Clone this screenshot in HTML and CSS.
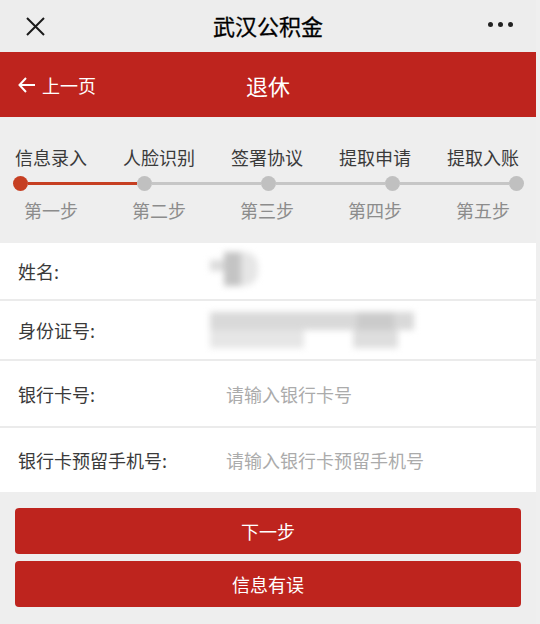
FILE: index.html
```html
<!DOCTYPE html>
<html lang="zh-CN">
<head>
<meta charset="utf-8">
<title>武汉公积金</title>
<link rel="stylesheet" href="styles.css">
</head>
<body>
<div class="page">
  <div class="topbar">
    <div class="tb-left">
      <svg class="ic-close" width="19" height="19" viewBox="0 0 19 19"><path d="M1 1L18 18M18 1L1 18" stroke="#1a1a1a" stroke-width="2" fill="none"/></svg>
    </div>
    <div class="tb-title">武汉公积金</div>
    <div class="tb-right"><span class="dot"></span><span class="dot"></span><span class="dot"></span></div>
  </div>

  <div class="header">
    <div class="back">
      <svg width="18" height="16" viewBox="0 0 18 16"><path d="M8 1L1.5 8L8 15M1.5 8H17" stroke="#fff" stroke-width="2" fill="none" stroke-linejoin="miter"/></svg>
      <span>上一页</span>
    </div>
    <div class="h-title">退休</div>
    <div></div>
  </div>

  <div class="steps">
    <div class="step-labels step-top">
      <span>信息录入</span><span>人脸识别</span><span>签署协议</span><span>提取申请</span><span>提取入账</span>
    </div>
    <div class="track">
      <span class="sdot on"></span><span class="seg on"></span>
      <span class="sdot"></span><span class="seg"></span>
      <span class="sdot"></span><span class="seg"></span>
      <span class="sdot"></span><span class="seg"></span>
      <span class="sdot"></span>
    </div>
    <div class="step-labels step-sub">
      <span>第一步</span><span>第二步</span><span>第三步</span><span>第四步</span><span>第五步</span>
    </div>
  </div>

  <div class="form">
    <div class="row r1"><div class="label">姓名:</div><div class="value"><div class="blur blur-name"></div></div></div>
    <div class="row r2"><div class="label">身份证号:</div><div class="value"><div class="blur blur-id"></div></div></div>
    <div class="row r3"><div class="label">银行卡号:</div><div class="value">请输入银行卡号</div></div>
    <div class="row r4"><div class="label">银行卡预留手机号:</div><div class="value">请输入银行卡预留手机号</div></div>
  </div>

  <div class="actions">
    <button class="btn">下一步</button>
    <button class="btn">信息有误</button>
  </div>
</div>
</body>
</html>
```

FILE: styles.css
```css
body {
  margin: 0;
  background: #efefef;
  font-family: "Noto Sans CJK SC", "Noto Sans", sans-serif;
}

.page {
  width: 536px;
  min-height: 624px;
  background: #eeeeee;
}

/* top bar */
.topbar {
  height: 52px;
  background: #ededed;
  display: grid;
  grid-template-columns: 1fr auto 1fr;
  align-items: center;
}
.tb-left {
  padding-left: 26px;
  display: flex;
}
.tb-title {
  font-size: 22px;
  color: #000;
  font-weight: 400;
  line-height: 28px;
  margin-top: -2px;
  -webkit-text-stroke: 0.3px #000;
}
.tb-right {
  justify-self: end;
  padding-right: 23px;
  display: flex;
  gap: 5px;
  margin-top: -3px;
}
.dot {
  width: 5px;
  height: 5px;
  border-radius: 50%;
  background: #222;
}

/* red header */
.header {
  height: 65px;
  background: #be241e;
  display: grid;
  grid-template-columns: 1fr auto 1fr;
  align-items: center;
  color: #fff;
}
.back {
  padding-left: 18px;
  display: flex;
  align-items: center;
  gap: 6px;
  font-size: 18px;
  line-height: 24px;
}
.h-title {
  font-size: 22px;
  line-height: 28px;
}

/* steps */
.steps {
  height: 126px;
  box-sizing: border-box;
  padding-top: 27px;
  background: #eeeeee;
}
.step-labels {
  display: grid;
  grid-template-columns: repeat(5, 1fr);
  margin: 0 -1px 0 -3px;
  font-size: 18px;
  line-height: 26px;
  text-align: center;
}
.step-top {
  color: #3a3a3a;
}
.step-sub {
  color: #8c8c8c;
  margin-top: 6px;
}
.track {
  display: flex;
  align-items: center;
  height: 15px;
  margin-top: 6px;
  padding: 0 12px 0 13px;
}
.sdot {
  flex: none;
  width: 15px;
  height: 15px;
  border-radius: 50%;
  background: #c0c0c0;
}
.sdot.on {
  background: #c63f22;
}
.seg {
  flex: 1;
  height: 3px;
  background: #c6c6c6;
}
.seg.on {
  background: #c63f22;
}

/* form */
.form {
  display: flex;
  flex-direction: column;
  gap: 2px;
  background: #ebebeb;
}
.row {
  display: grid;
  grid-template-columns: 208px 1fr;
  align-items: center;
  padding-left: 18px;
  background: #fff;
  font-size: 18px;
  line-height: 24px;
}
.r1 { height: 56px; }
.r2 { height: 58px; }
.r3 { height: 65px; }
.r4 { height: 64px; }
.label {
  color: #3a3a3a;
}
.value {
  color: #ababab;
  display: flex;
  align-items: center;
}
.blur {
  filter: blur(3px);
  margin-left: -16px;
}
.blur-name {
  width: 48px;
  height: 34px;
  margin-top: -4px;
  background:
    linear-gradient(to right, #dcdcdc 0 30%, transparent 30%) 0 8px / 100% 11px no-repeat,
    linear-gradient(to right, transparent 0 30%, #c4c4c4 30% 64%, #e6e6e6 64% 100%);
  border-radius: 0 14px 14px 0;
}
.blur-id {
  width: 204px;
  height: 36px;
  background:
    linear-gradient(to right, transparent 0 72%, #cbcbcb 72% 90%, transparent 90%) top / 100% 50% no-repeat,
    linear-gradient(#d9d9d9, #d9d9d9) top / 100% 50% no-repeat,
    linear-gradient(to right, #e6e6e6 0 46%, transparent 46% 70%, #dedede 70% 92%, transparent 92%) bottom / 100% 50% no-repeat;
}

/* buttons */
.actions {
  padding: 16px 15px 0;
  display: flex;
  flex-direction: column;
  gap: 7px;
}
.btn {
  height: 46px;
  border: none;
  border-radius: 4px;
  background: #be241e;
  color: #fff;
  font-size: 18px;
  font-family: inherit;
  padding: 0;
}
```
